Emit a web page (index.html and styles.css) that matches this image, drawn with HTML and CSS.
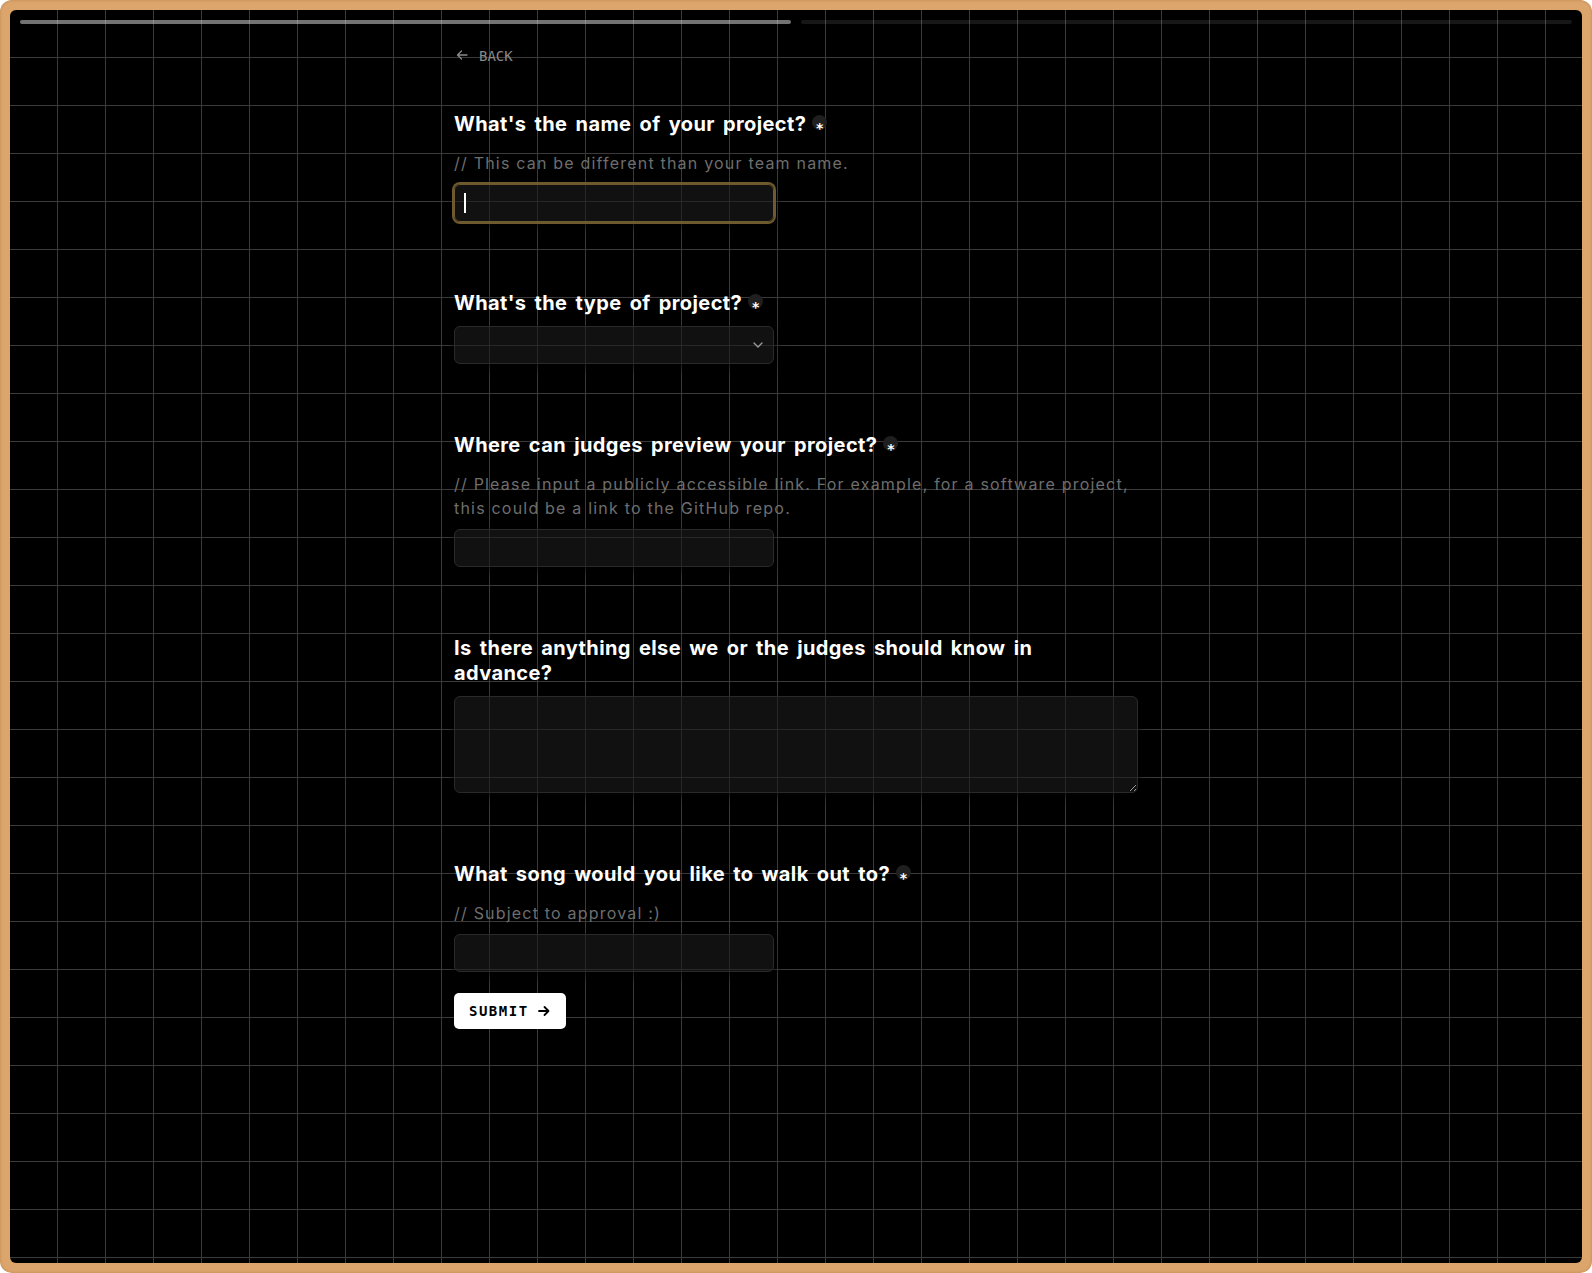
FILE: index.html
```html
<!DOCTYPE html>
<html lang="en">
<head>
<meta charset="utf-8">
<title>Project submission</title>
<link rel="stylesheet" href="styles.css">
</head>
<body>
<div class="outer">
  <div class="frame">
    <div class="progress">
      <div class="bar bar-done"></div>
      <div class="bar bar-todo"></div>
    </div>
    <form class="form">
      <a class="back" href="#">
        <svg class="back-icon" width="12" height="12" viewBox="0 0 12 12" fill="none" stroke="currentColor" stroke-width="1.3" stroke-linecap="round" stroke-linejoin="round"><path d="M11 6H1.5M5.5 2L1.5 6l4 4"/></svg>
        <span>BACK</span>
      </a>

      <section class="field first">
        <h2 class="q">What's the name of your project?<span class="req">*</span></h2>
        <p class="hint">// This can be different than your team name.</p>
        <div class="input-wrap">
          <input class="input focused" type="text">
          <span class="caret"></span>
        </div>
      </section>

      <section class="field">
        <h2 class="q">What's the type of project?<span class="req">*</span></h2>
        <div class="select-wrap">
          <select class="input select"><option></option></select>
          <svg class="chev" width="10" height="6" viewBox="0 0 10 6" fill="none" stroke="currentColor" stroke-width="1.4" stroke-linecap="round" stroke-linejoin="round"><path d="M1 1l4 4 4-4"/></svg>
        </div>
      </section>

      <section class="field">
        <h2 class="q">Where can judges preview your project?<span class="req">*</span></h2>
        <p class="hint">// Please input a publicly accessible link. For example, for a software project, this could be a link to the GitHub repo.</p>
        <input class="input" type="text">
      </section>

      <section class="field">
        <h2 class="q">Is there anything else we or the judges should know in advance?</h2>
        <textarea class="input textarea"></textarea>
      </section>

      <section class="field">
        <h2 class="q">What song would you like to walk out to?<span class="req">*</span></h2>
        <p class="hint">// Subject to approval :)</p>
        <input class="input" type="text">
      </section>

      <button class="submit" type="button">
        <span>SUBMIT</span>
        <svg width="12" height="12" viewBox="0 0 12 12" fill="none" stroke="currentColor" stroke-width="1.8" stroke-linecap="round" stroke-linejoin="round"><path d="M1 6h9.5M6.5 2l4 4-4 4"/></svg>
      </button>
    </form>
  </div>
</div>
</body>
</html>
```

FILE: styles.css
```css
* { box-sizing: border-box; }

html, body {
  margin: 0;
  padding: 0;
  background: #ffffff;
}

.outer {
  width: 1592px;
  height: 1273px;
  padding: 10px;
  background: #dca56c;
  border-radius: 12px;
  box-shadow: inset 0 0 3px rgba(150, 95, 40, 0.45);
}

.frame {
  height: 1253px;
  border-radius: 6px;
  overflow: hidden;
  background-color: #000;
  background-image:
    linear-gradient(to right, #3a3a3a 1px, transparent 1px),
    linear-gradient(to bottom, #3a3a3a 1px, transparent 1px);
  background-size: 48px 48px;
  background-position: 47px 47px;
}

.progress {
  display: flex;
  gap: 10px;
  padding: 10px 10px 0;
}

.bar {
  flex: 1;
  height: 4px;
  border-radius: 2px;
}

.bar-done { background: rgba(255, 255, 255, 0.45); }
.bar-todo { background: rgba(255, 255, 255, 0.09); }

.form {
  width: 684px;
  margin: 21px auto 0;
  font-family: Inter, "Noto Sans", sans-serif;
}

.back {
  display: inline-flex;
  align-items: center;
  gap: 11px;
  height: 20px;
  padding-left: 2px;
  color: #8a8a8a;
  text-decoration: none;
  font: 400 14px/20px "DejaVu Sans Mono", "Liberation Mono", monospace;
}

.back-icon { margin-top: -1px; }

.field { margin-top: 69px; }
.field.first { margin-top: 46px; }

.q {
  margin: 0 0 10px;
  color: #fff;
  font-size: 20px;
  line-height: 25px;
  font-weight: 700;
  letter-spacing: 0.4px;
  word-spacing: 3px;
  max-width: 600px;
}

.req {
  display: inline-block;
  width: 15px;
  height: 15px;
  margin-left: 6px;
  padding-top: 6px;
  border-radius: 50%;
  background: #1f1f1f;
  color: #fff;
  text-align: center;
  vertical-align: -2px;
  font: 700 14px/15px "DejaVu Sans Mono", monospace;
  letter-spacing: 0;
  word-spacing: 0;
}

.hint {
  margin: 14px 0 9px;
  color: #6e6e6e;
  font-size: 16px;
  line-height: 24px;
  font-weight: 400;
  letter-spacing: 1.2px;
}

.input {
  display: block;
  width: 320px;
  height: 38px;
  margin: 0;
  padding: 0 10px;
  border: 1px solid #2a2a2a;
  border-radius: 6px;
  background: rgba(28, 28, 28, 0.6);
  color: #fff;
  font: 400 16px Inter, sans-serif;
  outline: none;
  box-shadow: 0 4px 10px rgba(0, 0, 0, 0.65);
}

.input.focused {
  border-color: #6e5a2e;
  box-shadow: 0 0 0 2px #6e5a2e, 0 4px 10px rgba(0, 0, 0, 0.65);
}

.input-wrap { position: relative; width: 320px; }

.caret {
  position: absolute;
  left: 10px;
  top: 9px;
  width: 1.5px;
  height: 20px;
  background: #fff;
}

.select-wrap { position: relative; width: 320px; }

.select {
  appearance: none;
  -webkit-appearance: none;
}

.chev {
  position: absolute;
  right: 11px;
  top: 16px;
  color: #9a9a9a;
  pointer-events: none;
}

.textarea {
  width: 684px;
  height: 97px;
  padding: 10px;
  resize: vertical;
}

.submit {
  display: inline-flex;
  align-items: center;
  gap: 9px;
  height: 36px;
  margin-top: 21px;
  padding: 0 16px 0 15px;
  border: 0;
  border-radius: 5px;
  background: #fff;
  color: #000;
  font: 700 14px/1 "DejaVu Sans Mono", "Liberation Mono", monospace;
  letter-spacing: 1.5px;
  cursor: pointer;
}
```
